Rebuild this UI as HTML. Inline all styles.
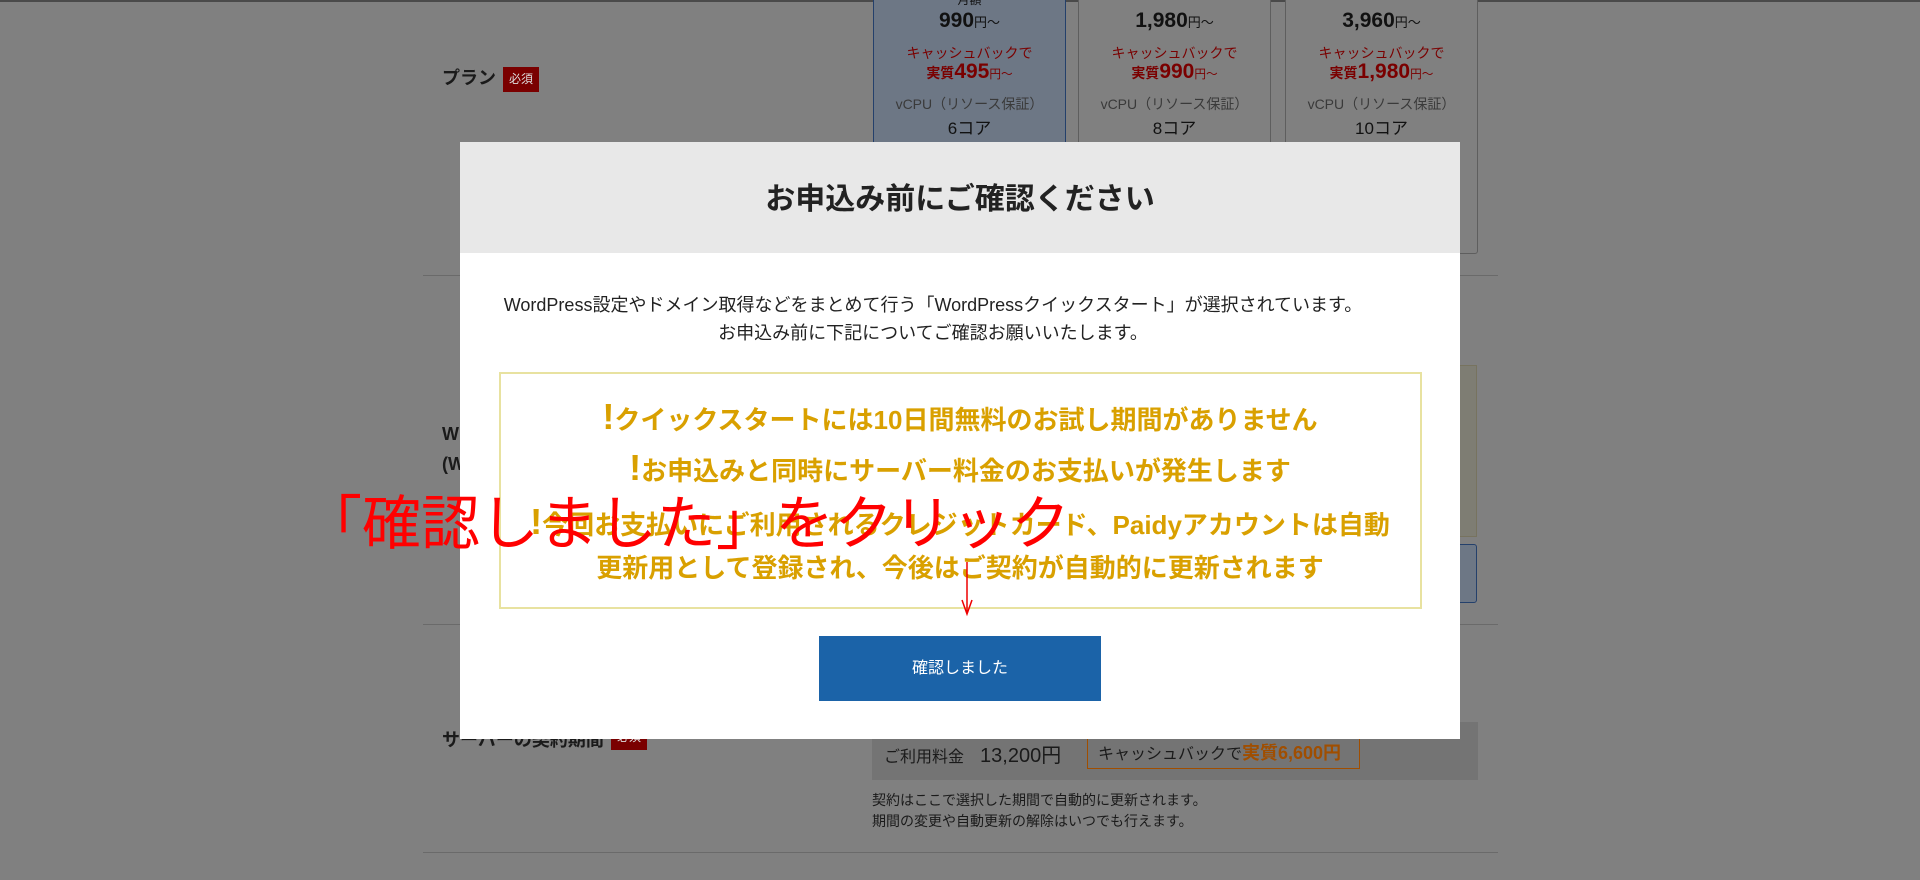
<!DOCTYPE html>
<html><head><meta charset="utf-8"><style>
*{margin:0;padding:0;box-sizing:border-box}
body{width:1920px;height:880px;background:#808080;position:relative;overflow:hidden;font-family:"Liberation Sans","Noto Sans CJK JP",sans-serif;color:#1a1a1a}
.a{position:absolute}
.c{text-align:center;white-space:nowrap}
.card{position:absolute;top:-6px;height:260px;border:1px solid #5e5e5e;border-radius:3px;background:#808080}
.card div{position:absolute;left:0;right:0;text-align:center;white-space:nowrap}
.pr{top:14px;font-size:21px;font-weight:bold;color:#111}
.pr small{font-size:13px;font-weight:normal}
.cb{top:48px;font-size:14px;color:#7a0000}
.jt{top:65px;font-size:14px;color:#7a0000;font-weight:bold}
.jt b{font-size:21px}
.vc{top:99px;font-size:14px;color:#3a3a3a}
.co{top:119px;font-size:17px;color:#111}
.y{color:#d9a000;font-weight:bold;font-size:26px;left:460px;width:1000px}
.y i{font-style:normal;font-size:36px;color:#d9a000}
</style></head><body>
<div class="a" style="left:0;top:0;width:1920px;height:2px;background:#4a4a4a"></div>
<div class="a" style="left:442px;top:64px;font-size:18px;font-weight:bold">プラン</div>
<div class="a" style="left:503px;top:67px;width:36px;height:25px;background:#7a0000;color:#ddd;font-size:12px;text-align:center;line-height:25px">必須</div>
<div class="card" style="left:873px;width:193px;background:#6d7785;border-color:#24406b"><div class="pr" style="top:-4px;font-size:12px;font-weight:normal">月額</div><div class="pr">990<small>円～</small></div><div class="cb">キャッシュバックで</div><div class="jt">実質<b>495</b><small style="font-weight:normal">円～</small></div><div class="vc">vCPU（リソース保証）</div><div class="co">6コア</div></div>
<div class="card" style="left:1078px;width:193px"><div class="pr">1,980<small>円～</small></div><div class="cb">キャッシュバックで</div><div class="jt">実質<b>990</b><small style="font-weight:normal">円～</small></div><div class="vc">vCPU（リソース保証）</div><div class="co">8コア</div></div>
<div class="card" style="left:1285px;width:193px"><div class="pr">3,960<small>円～</small></div><div class="cb">キャッシュバックで</div><div class="jt">実質<b>1,980</b><small style="font-weight:normal">円～</small></div><div class="vc">vCPU（リソース保証）</div><div class="co">10コア</div></div>
<div class="a" style="left:423px;top:275px;width:1075px;height:1px;background:#6a6a6a"></div>
<div class="a" style="left:423px;top:624px;width:1075px;height:1px;background:#6a6a6a"></div>
<div class="a" style="left:423px;top:852px;width:1075px;height:1px;background:#6a6a6a"></div>
<div class="a" style="left:1440px;top:365px;width:37px;height:172px;background:#7e7d73;border:1px solid #77735f"></div>
<div class="a" style="left:1440px;top:544px;width:37px;height:59px;background:#6d7785;border:1px solid #24406b;border-radius:3px"></div>
<div class="a" style="left:442px;top:424px;font-size:18px;font-weight:bold">W</div>
<div class="a" style="left:442px;top:454px;font-size:18px;font-weight:bold">(W</div>
<div class="a" style="left:442px;top:726px;font-size:18px;font-weight:bold">サーバーの契約期間</div>
<div class="a" style="left:611px;top:725px;width:36px;height:25px;background:#7a0000;color:#ddd;font-size:12px;text-align:center;line-height:25px">必須</div>
<div class="a" style="left:872px;top:722px;width:606px;height:58px;background:#747474"></div>
<div class="a" style="left:884px;top:739px;font-size:16px;color:#1a1a1a">ご利用料金　<span style="font-size:20px">13,200円</span></div>
<div class="a" style="left:1087px;top:737px;width:273px;height:32px;border:1px solid #a04e00;font-size:16px;line-height:30px;padding-left:10px;color:#1a1a1a">キャッシュバックで<b style="color:#a04e00;font-size:18px">実質6,600円</b></div>
<div class="a" style="left:872px;top:790px;font-size:14px;color:#1a1a1a;line-height:21px">契約はここで選択した期間で自動的に更新されます。<br>期間の変更や自動更新の解除はいつでも行えます。</div>

<div class="a" style="left:460px;top:142px;width:1000px;height:597px;background:#fff"></div>
<div class="a c" style="left:460px;top:142px;width:1000px;height:111px;background:#e8e8e8;font-size:30px;font-weight:bold;line-height:116px;color:#222">お申込み前にご確認ください</div>
<div class="a c" style="left:433px;top:291px;width:1000px;font-size:18px;line-height:28px;color:#222">WordPress設定やドメイン取得などをまとめて行う「WordPressクイックスタート」が選択されています。<br>お申込み前に下記についてご確認お願いいたします。</div>
<div class="a" style="left:499px;top:372px;width:923px;height:237px;border:2px solid #e8e2a0"></div>
<div class="a c y" style="top:396px"><i>!</i>クイックスタートには10日間無料のお試し期間がありません</div>
<div class="a c y" style="top:447px"><i>!</i>お申込みと同時にサーバー料金のお支払いが発生します</div>
<div class="a c y" style="top:501px"><i>!</i>今回お支払いにご利用されるクレジットカード、Paidyアカウントは自動</div>
<div class="a c y" style="top:548px">更新用として登録され、今後はご契約が自動的に更新されます</div>
<div class="a c" style="left:819px;top:636px;width:282px;height:65px;background:#1b63a8;color:#fff;font-size:16px;line-height:65px">確認しました</div>
<div class="a" style="left:303px;top:488px;font-size:59px;color:#f00;white-space:nowrap;line-height:72px">「確認しました」をクリック</div>
<svg class="a" style="left:958px;top:562px" width="20" height="55"><line x1="9" y1="0" x2="9" y2="50" stroke="#e00" stroke-width="1.5"/><path d="M4 38 L9 52 L14 38" fill="none" stroke="#e00" stroke-width="1.5"/></svg>
</body></html>
